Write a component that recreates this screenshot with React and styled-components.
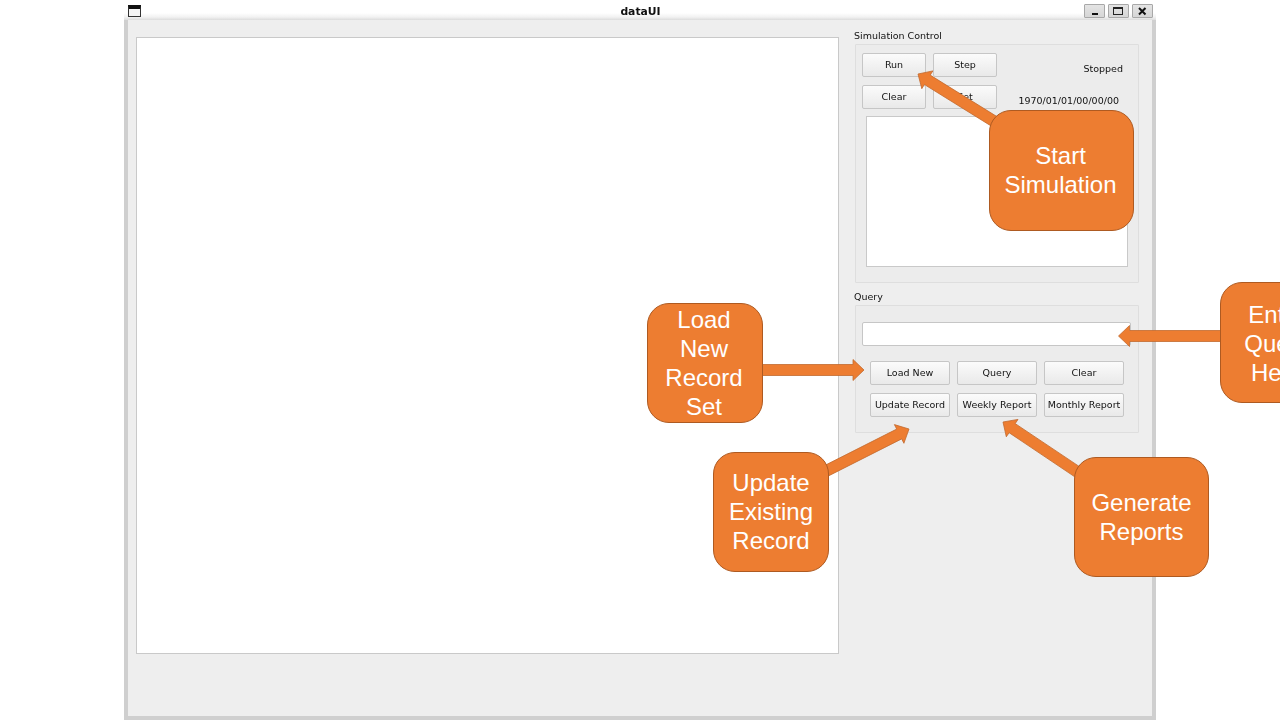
import React from "react";
import styled, { createGlobalStyle } from "styled-components";

const Global = createGlobalStyle`
  html, body { margin: 0; padding: 0; background: #fff; }
  * { box-sizing: border-box; }
`;

const Page = styled.div`
  position: relative;
  width: 1280px;
  height: 720px;
  overflow: hidden;
  background: #fff;
  padding-left: 124px;
`;

const Window = styled.div`
  width: 1032px;
  height: 720px;
  display: flex;
  flex-direction: column;
  font-family: "DejaVu Sans", sans-serif;
  font-size: 9.5px;
  color: #111;
  filter: blur(0.3px);
`;

const TitleBar = styled.div`
  height: 20px;
  flex: none;
  display: grid;
  grid-template-columns: 1fr auto 1fr;
  align-items: center;
  padding: 0 3px 0 4px;
  background: linear-gradient(to bottom, #fff 0, #fff 13px, #f2f2f2 17px, #dcdcdc 20px);
`;

const AppIcon = styled.div`
  width: 13px;
  height: 12px;
  margin-top: 2px;
  border: 1px solid #333;
  border-top: 4px solid #111;
  background: #f4f4f4;
`;

const Title = styled.div`
  font-size: 10.8px;
  font-weight: 700;
  color: #111;
  margin-top: 3px;
`;

const Controls = styled.div`
  display: flex;
  justify-content: flex-end;
  gap: 3px;
  margin-top: 2px;
`;

const Control = styled.button`
  width: 21px;
  height: 14px;
  padding: 0;
  display: block;
  background: linear-gradient(to bottom, #e4e4e4, #d6d6d6);
  border: 1px solid #a8a8a8;
  border-radius: 1px;
  svg { display: block; }
`;

const Client = styled.div`
  flex: 1;
  display: flex;
  align-items: flex-start;
  padding: 9px 0 0 8px;
  background: #eeeeee;
  border: solid #cfcfcf;
  border-width: 0 4px 4px 4px;
`;

const Canvas = styled.div`
  width: 703px;
  height: 617px;
  margin-top: 8px;
  background: #fff;
  border: 1px solid #c9c9c9;
`;

const Side = styled.div`
  width: 285px;
  margin-left: 15px;
  display: flex;
  flex-direction: column;
`;

const GroupLabel = styled.div`
  height: 15px;
  line-height: 13px;
  margin-top: ${(p) => p.$top || 0}px;
`;

const Group = styled.div`
  margin-left: 1px;
  width: 284px;
  height: ${(p) => p.$height}px;
  padding: ${(p) => p.$pad};
  background: #ececec;
  border: 1px solid #dedede;
  border-radius: 1px;
`;

const TopRow = styled.div`
  display: flex;
`;

const ButtonGrid = styled.div`
  display: grid;
  grid-template-columns: repeat(${(p) => p.$cols}, ${(p) => p.$w}px);
  grid-auto-rows: 24px;
  column-gap: 7px;
  row-gap: 8px;
  margin-left: ${(p) => p.$left || 0}px;
`;

const Button = styled.button`
  padding: 0 0 1px;
  font-family: "DejaVu Sans", sans-serif;
  font-size: 9.5px;
  color: #111;
  background: linear-gradient(to bottom, #fbfbfb, #e9e9e9);
  border: 1px solid #c6c6c6;
  border-radius: 2px;
`;

const StatusColumn = styled.div`
  flex: 1;
  display: flex;
  flex-direction: column;
  align-items: flex-end;
`;

const Status = styled.div`
  height: 14px;
  line-height: 14px;
  margin-top: ${(p) => p.$top}px;
  margin-right: ${(p) => p.$right}px;
  white-space: nowrap;
`;

const Log = styled.div`
  width: 262px;
  height: 151px;
  margin: 7px 0 0 4px;
  background: #fff;
  border: 1px solid #c9c9c9;
`;

const QueryInput = styled.input`
  display: block;
  width: 269px;
  height: 24px;
  margin-bottom: 15px;
  background: #fff;
  border: 1px solid #c6c6c6;
  border-radius: 2px;
  outline: none;
`;

const Arrows = styled.svg`
  position: absolute;
  left: 0;
  top: 0;
`;

const Callout = styled.div`
  position: absolute;
  left: ${(p) => p.$x}px;
  top: ${(p) => p.$y}px;
  width: ${(p) => p.$w}px;
  height: ${(p) => p.$h}px;
  display: flex;
  align-items: center;
  justify-content: center;
  text-align: center;
  font-family: "Liberation Sans", Arial, sans-serif;
  font-size: 24px;
  line-height: 29px;
  color: #fff;
  background: #ed7d31;
  border: 1px solid #ae5a21;
  border-radius: 22px;
`;

const CalloutText = styled.div`
  margin: ${(p) => p.$nudge};
`;

const arrowPoints = ([tx, ty], [hx, hy], shaft = 11, head = 21, len = 11) => {
  const d = Math.hypot(hx - tx, hy - ty);
  const ux = (hx - tx) / d;
  const uy = (hy - ty) / d;
  const nx = -uy;
  const ny = ux;
  const bx = hx - ux * len;
  const by = hy - uy * len;
  const p = (x, y, o) => `${(x + nx * o).toFixed(1)},${(y + ny * o).toFixed(1)}`;
  return [
    p(tx, ty, shaft / 2),
    p(bx, by, shaft / 2),
    p(bx, by, head / 2),
    p(hx, hy, 0),
    p(bx, by, -head / 2),
    p(bx, by, -shaft / 2),
    p(tx, ty, -shaft / 2),
  ].join(" ");
};

const ARROWS = [
  { from: [1000, 125], to: [918, 74] },
  { from: [760, 370], to: [864, 370] },
  { from: [1224, 336], to: [1118.5, 336] },
  { from: [824, 472], to: [909, 429] },
  { from: [1082, 475], to: [1003, 422] },
];

const CALLOUTS = [
  { x: 989, y: 110, w: 145, h: 121, nudge: "-2px 2px 0 0", lines: ["Start", "Simulation"] },
  { x: 647, y: 303, w: 116, h: 120, nudge: "0 2px 0 0", lines: ["Load", "New", "Record", "Set"] },
  { x: 1220, y: 282, w: 116, h: 121, nudge: "1px 2px 0 0", lines: ["Enter", "Query", "Here"] },
  { x: 713, y: 452, w: 116, h: 120, nudge: "-2px 0 0 0", lines: ["Update", "Existing", "Record"] },
  { x: 1074, y: 457, w: 135, h: 120, nudge: "0", lines: ["Generate", "Reports"] },
];

export default function App() {
  return (
    <Page>
      <Global />
      <Window>
        <TitleBar>
          <AppIcon />
          <Title>dataUI</Title>
          <Controls>
            <Control aria-label="Minimize">
              <svg width="19" height="12" viewBox="0 0 19 12">
                <rect x="7" y="8" width="6" height="2" fill="#111" />
              </svg>
            </Control>
            <Control aria-label="Maximize">
              <svg width="19" height="12" viewBox="0 0 19 12">
                <rect x="4.5" y="2.5" width="9" height="7" fill="none" stroke="#222" />
                <rect x="4" y="2" width="10" height="2" fill="#222" />
              </svg>
            </Control>
            <Control aria-label="Close">
              <svg width="19" height="12" viewBox="0 0 19 12">
                <path d="M6 3 L12.5 9.5 M12.5 3 L6 9.5" stroke="#111" strokeWidth="2" />
              </svg>
            </Control>
          </Controls>
        </TitleBar>
        <Client>
          <Canvas />
          <Side>
            <GroupLabel>Simulation Control</GroupLabel>
            <Group $height={239} $pad="8px 0 0 6px">
              <TopRow>
                <ButtonGrid $cols={2} $w={64}>
                  <Button>Run</Button>
                  <Button>Step</Button>
                  <Button>Clear</Button>
                  <Button>Set</Button>
                </ButtonGrid>
                <StatusColumn>
                  <Status $top={9} $right={15}>Stopped</Status>
                  <Status $top={18} $right={19}>1970/01/01/00/00/00</Status>
                </StatusColumn>
              </TopRow>
              <Log />
            </Group>
            <GroupLabel $top={7}>Query</GroupLabel>
            <Group $height={128} $pad="16px 0 0 6px">
              <QueryInput />
              <ButtonGrid $cols={3} $w={80} $left={8}>
                <Button>Load New</Button>
                <Button>Query</Button>
                <Button>Clear</Button>
                <Button>Update Record</Button>
                <Button>Weekly Report</Button>
                <Button>Monthly Report</Button>
              </ButtonGrid>
            </Group>
          </Side>
        </Client>
      </Window>
      <Arrows width="1280" height="720" viewBox="0 0 1280 720">
        {ARROWS.map((a, i) => (
          <polygon key={i} points={arrowPoints(a.from, a.to)} fill="#ed7d31" stroke="#c26a2e" strokeWidth="0.8" />
        ))}
      </Arrows>
      {CALLOUTS.map((c) => (
        <Callout key={c.lines.join()} $x={c.x} $y={c.y} $w={c.w} $h={c.h}>
          <CalloutText $nudge={c.nudge}>
            {c.lines.map((l) => (
              <div key={l}>{l}</div>
            ))}
          </CalloutText>
        </Callout>
      ))}
    </Page>
  );
}
